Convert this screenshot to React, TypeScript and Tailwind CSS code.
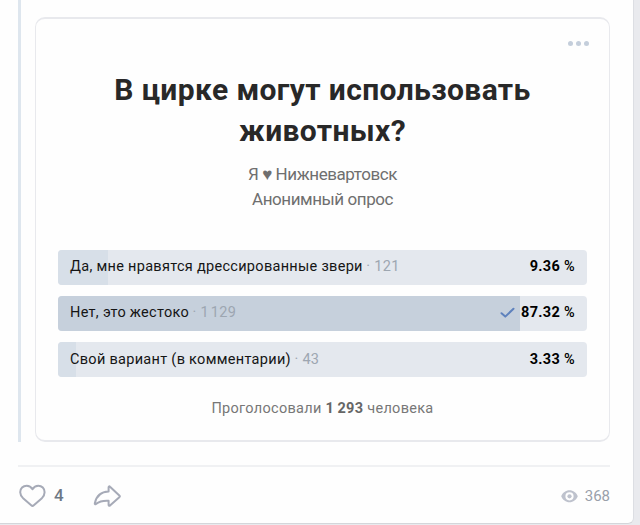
import React from "react";

const options = [
  { id: 1, text: "Да, мне нравятся дрессированные звери", votes: "121", percent: 9.36, chosen: false },
  { id: 2, text: "Нет, это жестоко", votes: "1\u200a129", percent: 87.32, chosen: true },
  { id: 3, text: "Свой вариант (в комментарии)", votes: "43", percent: 3.33, chosen: false },
];

const CheckIcon = () => (
  <svg width="16" height="12" viewBox="0 0 16 12" fill="none" className="mr-[5px]">
    <path d="M1.500 6.200L5.300 9.600L13.500 1.700" stroke="#5f82bd" strokeWidth="2" strokeLinecap="round" strokeLinejoin="round" />
  </svg>
);

const HeartIcon = () => (
  <svg width="28" height="24" viewBox="0 0 28 24" fill="none">
    <path
      d="M14.500 5.200C13.100 2.900 11.100 1.700 8.700 1.700C5 1.700 2.200 4.500 2.200 8.200C2.200 10.600 3.400 12.700 5.400 14.600L13.200 21.300C14 22 15 22 15.800 21.300L23.600 14.600C25.600 12.700 26.600 10.600 26.600 8.200C26.600 4.500 23.900 1.700 20.300 1.700C17.900 1.700 15.900 2.900 14.500 5.200Z"
      stroke="#a6aab7"
      strokeWidth="2"
      strokeLinejoin="round"
    />
  </svg>
);

const ShareIcon = () => (
  <svg width="29" height="23" viewBox="0 0 29 23" fill="none">
    <path
      d="M15.600 6.600V2.200C15.600 1.400 16.400 1.100 17 1.700L26.600 10.700C27 11.100 27 11.500 26.600 11.900L17 20.500C16.400 21.100 15.600 20.800 15.600 20V15.700C9.900 15.400 6.200 16.300 3 18.900C2.200 19.600 1.600 19.200 1.800 18.300C3.300 11.500 7.600 6.900 15.600 6.600Z"
      stroke="#a6aab7"
      strokeWidth="2"
      strokeLinejoin="round"
    />
  </svg>
);

const EyeIcon = () => (
  <svg width="17" height="13" viewBox="0 0 17 13">
    <path
      fillRule="evenodd"
      d="M8.500 0.300C4.800 0.300 1.600 2.700 0.200 6.300C1.600 9.900 4.800 12.300 8.500 12.300S15.400 9.900 16.800 6.300C15.400 2.700 12.200 0.300 8.500 0.300ZM8.500 10.400A4.100 4.100 0 1 1 8.500 2.200A4.100 4.100 0 0 1 8.500 10.400Z"
      fill="#bec2cd"
    />
    <circle cx="8.500" cy="6.300" r="2.100" fill="#bec2cd" />
  </svg>
);

const App = () => {
  return (
    <div className="h-[525px] w-[640px] overflow-hidden bg-[#e9eaee] font-['Roboto',sans-serif]">
      <div className="h-[524px] w-[634px] rounded-br-[6px] border-r border-b border-[#dcdee3] border-b-[#d4d6da] bg-[#fefefe] pr-[23px] pl-[18px]">
        {/* Quoted poll */}
        <div className="h-[442px] border-l-[3px] border-[#dee6ee] pt-[17px] pl-[14px]">
          <div className="flex h-[425px] flex-col rounded-[10px] border-x-[1px] border-y-2 border-[#e8e9ed] px-[22px]">
            <div className="mt-[22px] -mr-[2px] flex h-[5px] justify-end gap-[3px]">
              <span className="size-[5px] rounded-full bg-[#c4cedb]" />
              <span className="size-[5px] rounded-full bg-[#c4cedb]" />
              <span className="size-[5px] rounded-full bg-[#c4cedb]" />
            </div>

            <h2 className="mt-[23px] text-center text-[30px] leading-[41px] font-bold tracking-[0.380px] text-[#282828]">
              В цирке могут использовать
              <br />
              животных?
            </h2>
            <div className="mt-[11px] text-center text-[17px] leading-[25px] tracking-[-0.430px] text-[#6f6f6f]">
              <p>Я ♥ Нижневартовск</p>
              <p>Анонимный опрос</p>
            </div>

            <div className="mt-[37.500px] flex flex-col gap-[11px]">
              {options.map((option) => (
                <div
                  key={option.id}
                  className="relative h-[35.300px] overflow-hidden rounded-[4px] bg-[#e4e8ee]"
                >
                  <div
                    className={`absolute inset-y-0 left-0 ${option.chosen ? "bg-[#c6d0dc]" : "bg-[#d7dfe8]"}`}
                    style={{ width: `${option.percent}%` }}
                  />
                  <div className="relative flex h-[34.600px] items-center px-3 text-[14.500px] tracking-[0.3px] text-[#151515]">
                    <span>{option.text}</span>
                    <span className="ml-[3.500px] text-[#9da6b1]">· {option.votes}</span>
                    <span className="ml-auto flex items-center font-bold text-black">
                      {option.chosen && <CheckIcon />}
                      {option.percent}
                      <span className="ml-[4px] font-medium">%</span>
                    </span>
                  </div>
                </div>
              ))}
            </div>

            <p className="mt-[21.300px] text-center text-[14.500px] leading-[20px] tracking-[0.3px] text-[#777777]">
              Проголосовали <b className="font-bold text-[#666666]">1&#8201;293</b> человека
            </p>
          </div>
        </div>

        {/* Post actions */}
        <div className="mt-[23px] flex h-[60px] items-center border-t-2 border-[#f0f1f3]">
          <HeartIcon />
          <span className="ml-2 text-[17px] font-medium text-[#6d7885]">4</span>
          <span className="ml-[29px]">
            <ShareIcon />
          </span>
          <div className="ml-auto flex items-center gap-[7px] text-[15px] text-[#99a0aa]">
            <EyeIcon />
            <span>368</span>
          </div>
        </div>
      </div>
    </div>
  );
};

export default App;
